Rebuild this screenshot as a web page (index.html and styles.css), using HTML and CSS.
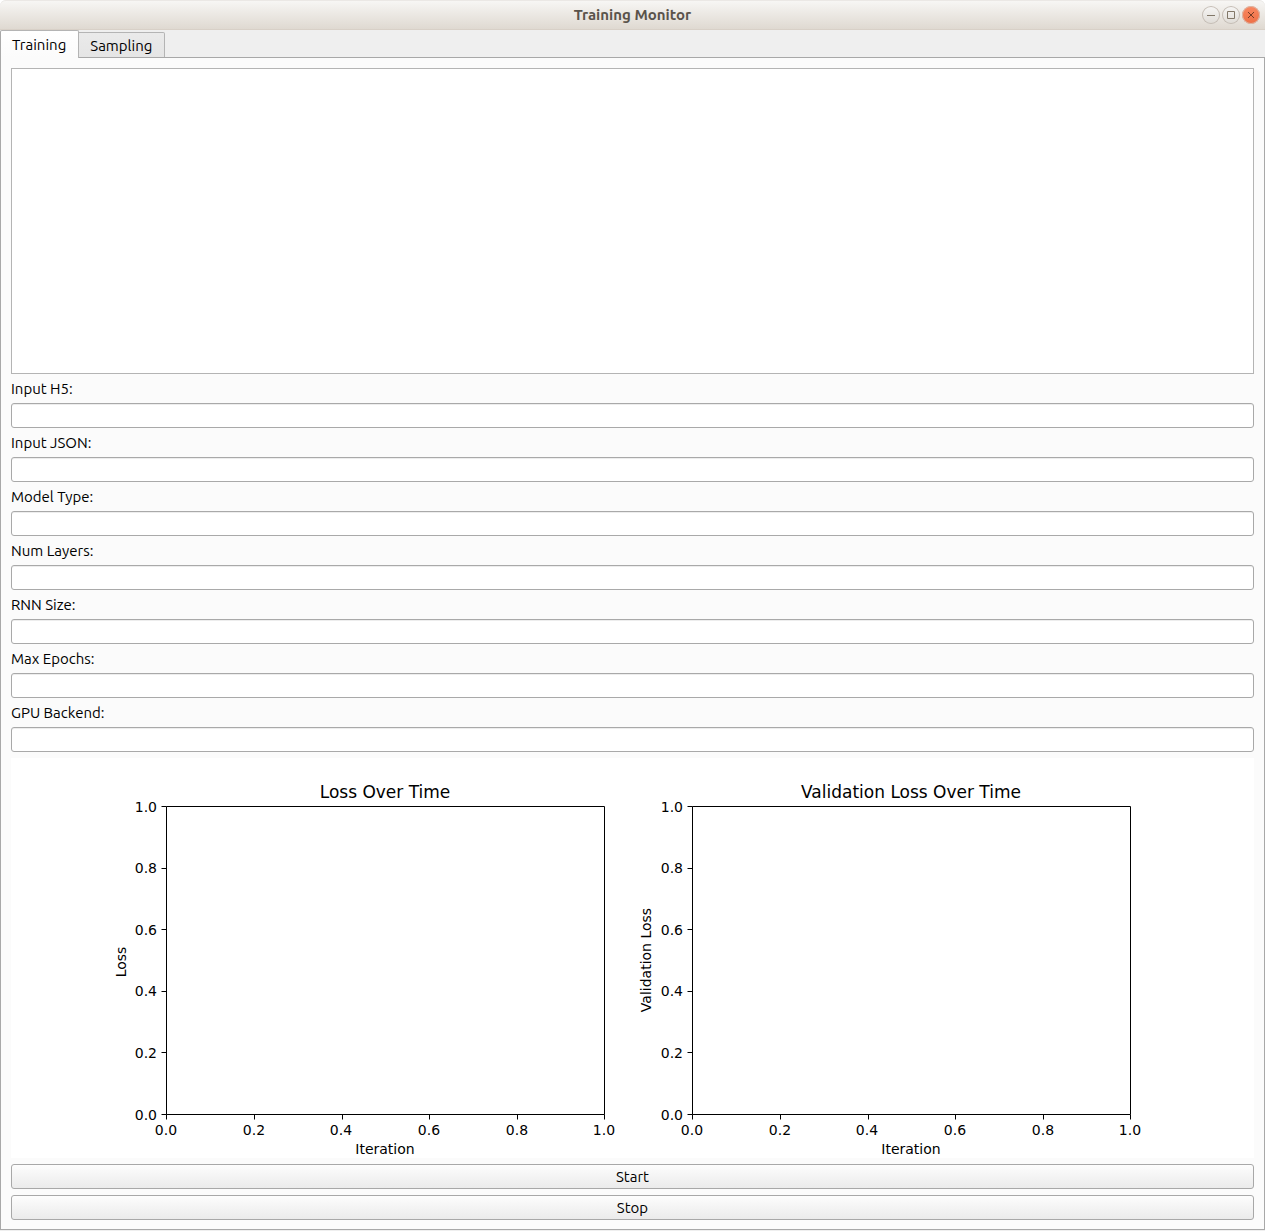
FILE: index.html
```html
<!DOCTYPE html>
<html lang="en">
<head>
<meta charset="utf-8">
<title>Training Monitor</title>
<link rel="stylesheet" href="styles.css">
</head>
<body>
<div class="window">
  <header class="titlebar">
    <h1 class="title">Training Monitor</h1>
    <div class="controls">
      <button class="control" type="button" aria-label="Minimize"><svg width="18" height="18" viewBox="0 0 18 18"><path d="M5 9.500h8"/></svg></button>
      <button class="control" type="button" aria-label="Maximize"><svg width="18" height="18" viewBox="0 0 18 18"><path d="M5.500 5.500h7v7h-7z"/></svg></button>
      <button class="control control-close" type="button" aria-label="Close"><svg width="18" height="18" viewBox="0 0 18 18"><path d="M6 6l6 6M12 6l-6 6"/></svg></button>
    </div>
  </header>
  <div class="tabs" role="tablist">
    <button class="tab tab-active" type="button" role="tab" aria-selected="true">Training</button>
    <button class="tab" type="button" role="tab" aria-selected="false">Sampling</button>
  </div>
  <main class="pane">
    <textarea class="log" aria-label="Training output" readonly></textarea>
    <label class="label" for="h5">Input H5:</label>
    <input class="field" id="h5" type="text">
    <label class="label" for="json">Input JSON:</label>
    <input class="field" id="json" type="text">
    <label class="label" for="model">Model Type:</label>
    <input class="field" id="model" type="text">
    <label class="label" for="layers">Num Layers:</label>
    <input class="field" id="layers" type="text">
    <label class="label" for="rnn">RNN Size:</label>
    <input class="field" id="rnn" type="text">
    <label class="label" for="epochs">Max Epochs:</label>
    <input class="field" id="epochs" type="text">
    <label class="label" for="gpu">GPU Backend:</label>
    <input class="field" id="gpu" type="text">
    <svg class="charts" viewBox="0 0 1243 400" role="img" aria-label="Loss and validation loss charts">
      <defs>
        <g id="axes">
          <path class="axis" d="M155.500 48.500h438v308h-438zM155.500 356.500v5M243.500 356.500v5M331.500 356.500v5M418.500 356.500v5M506.500 356.500v5M593.500 356.500v5M155.500 48.500h-5M155.500 110.500h-5M155.500 171.500h-5M155.500 233.500h-5M155.500 294.500h-5M155.500 356.500h-5"/>
          <g class="tick-y">
            <text x="146" y="54">1.0</text><text x="146" y="115">0.8</text><text x="146" y="177">0.6</text><text x="146" y="238">0.4</text><text x="146" y="300">0.2</text><text x="146" y="362">0.0</text>
          </g>
          <g class="tick-x">
            <text x="155" y="377">0.0</text><text x="243" y="377">0.2</text><text x="330" y="377">0.4</text><text x="418" y="377">0.6</text><text x="506" y="377">0.8</text><text x="593" y="377">1.0</text>
            <text x="374" y="396">Iteration</text>
          </g>
        </g>
      </defs>
      <use href="#axes"/>
      <text class="chart-title" x="374" y="40">Loss Over Time</text>
      <text class="axis-name" transform="translate(115 204) rotate(-90)">Loss</text>
      <use href="#axes" x="526"/>
      <text class="chart-title" x="900" y="40">Validation Loss Over Time</text>
      <text class="axis-name" transform="translate(640 202) rotate(-90)">Validation Loss</text>
    </svg>
    <button class="action" type="button">Start</button>
    <button class="action" type="button">Stop</button>
  </main>
</div>
</body>
</html>
```
FILE: styles.css
```css
* { box-sizing: border-box; }
body {
  margin: 0;
  background: #fff;
  color: #000;
  font: 15px/17px Ubuntu, "Noto Sans", sans-serif;
}
button, input, textarea { font: inherit; color: inherit; margin: 0; }
.window {
  display: flex;
  flex-direction: column;
  min-height: 100vh;
  padding-bottom: 1px;
  background: #efefef;
  border-radius: 6px 6px 0 0;
}
.titlebar {
  display: grid;
  grid-template-columns: 1fr auto 1fr;
  align-items: center;
  height: 30px;
  padding: 0 5px;
  background: linear-gradient(#f7f6f4, #dfd9d1);
  border-top: 1px solid #ebe8e5;
  border-bottom: 1px solid #d8d0c7;
  border-radius: 6px 6px 0 0;
}
.title {
  grid-column: 2;
  margin: 0;
  padding-bottom: 2px;
  font-size: 15px;
  font-weight: 700;
  color: #5a534b;
}
.controls { display: flex; justify-content: flex-end; gap: 2px; }
.control {
  display: flex;
  width: 18px;
  height: 18px;
  padding: 0;
  border: 0;
  border-radius: 50%;
  box-shadow: inset 0 0 0 1px #c5bdb5;
  background: linear-gradient(#f7f6f5, #dfdbd6);
}
.control path { fill: none; stroke: #817768; }
.control-close { background: linear-gradient(#f98861, #ed6f45); box-shadow: inset 0 0 0 1px #d9b9aa; }
.control-close path { stroke: #743c26; }
.tabs { display: flex; align-items: flex-end; height: 28px; margin-bottom: -1px; }
.tab {
  height: 26px;
  padding: 0 12px 0 11px;
  border: 1px solid #b4b4b4;
  border-left: 0;
  border-radius: 0 2px 0 0;
  background: linear-gradient(#eaeaea, #e5e5e5);
}
.tab-active {
  height: 28px;
  border-left: 1px solid #a8a8a8;
  border-bottom: 0;
  border-radius: 2px 2px 0 0;
  background: linear-gradient(#fff, #fbfbfb);
  z-index: 1;
}
.pane {
  display: flex;
  flex: 1;
  flex-direction: column;
  gap: 6px;
  padding: 10px 10px 9px;
  border: 1px solid #a8a8a8;
  background: #fbfbfb;
}
.log {
  flex: 1;
  min-height: 120px;
  border: 1px solid #b4b4b4;
  background: #fff;
  resize: none;
}
.label { height: 17px; }
.field {
  width: 100%;
  height: 25px;
  padding: 0 4px;
  border: 1px solid #a9a9a9;
  border-radius: 3px;
  background: #fff;
  box-shadow: inset 0 1px #ededed;
}
.charts {
  display: block;
  width: 100%;
  background: #fff;
  font: 14px "DejaVu Sans", sans-serif;
}
.axis { fill: none; stroke: #000; }
.tick-y { text-anchor: end; }
.tick-x, .chart-title, .axis-name { text-anchor: middle; }
.chart-title { font-size: 17px; }
.action {
  height: 25px;
  padding: 0;
  border: 1px solid #a8a8a8;
  border-radius: 3px;
  background: linear-gradient(#fdfdfd, #ebebeb);
}
```
